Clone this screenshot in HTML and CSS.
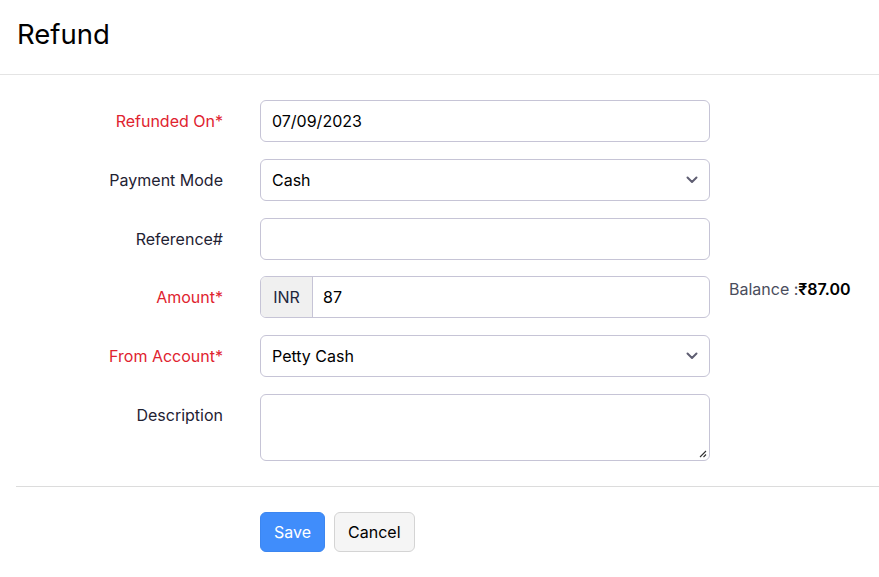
FILE: index.html
```html
<!DOCTYPE html>
<html>
<head>
<meta charset="utf-8">
<link rel="stylesheet" href="styles.css">
</head>
<body>
<div class="header"><h1 class="title">Refund</h1></div>
<form class="form">
  <div class="row">
    <label class="label required">Refunded On*</label>
    <div class="field"><div class="input">07/09/2023</div></div>
  </div>
  <div class="row">
    <label class="label">Payment Mode</label>
    <div class="field"><div class="input select">Cash<svg class="chev" width="12" height="8" viewBox="0 0 12 8"><path d="M1.5 1.5 L6 6 L10.5 1.5" fill="none" stroke="#5f5e72" stroke-width="2" stroke-linecap="round" stroke-linejoin="round"/></svg></div></div>
  </div>
  <div class="row">
    <label class="label">Reference#</label>
    <div class="field"><div class="input"></div></div>
  </div>
  <div class="row">
    <label class="label required">Amount*</label>
    <div class="field"><div class="input group"><span class="addon">INR</span><span class="gval">87</span></div></div>
    <div class="balance">Balance :<b>₹87.00</b></div>
  </div>
  <div class="row">
    <label class="label required">From Account*</label>
    <div class="field"><div class="input select">Petty Cash<svg class="chev" width="12" height="8" viewBox="0 0 12 8"><path d="M1.5 1.5 L6 6 L10.5 1.5" fill="none" stroke="#5f5e72" stroke-width="2" stroke-linecap="round" stroke-linejoin="round"/></svg></div></div>
  </div>
  <div class="row">
    <label class="label">Description</label>
    <div class="field"><div class="input textarea"><svg class="grip" width="9" height="9" viewBox="0 0 9 9"><path d="M8 2 L2 8 M8 5.5 L5.5 8" stroke="#333" stroke-width="1.1"/></svg></div></div>
  </div>
</form>
<div class="footer">
  <button type="button" class="btn primary">Save</button>
  <button type="button" class="btn">Cancel</button>
</div>
</body>
</html>
```
FILE: styles.css
```css
* { box-sizing: border-box; }
body {
  margin: 0;
  font-family: Inter, "Noto Sans", sans-serif;
  color: #21263c;
  background: #fff;
  width: 879px;
  height: 577px;
  overflow: hidden;
}
.header {
  height: 75px;
  border-bottom: 1px solid #e4e4e4;
  padding: 17px 0 0 17px;
}
.title {
  margin: 0;
  font-size: 27.5px;
  font-weight: 400;
  line-height: 34px;
  color: #000;
}
.form {
  padding-top: 25px;
  margin: 0 0 0 16px;
  border-bottom: 1px solid #dcdcdc;
  padding-bottom: 25px;
}
.row {
  display: flex;
  align-items: flex-start;
  margin-bottom: 16.8px;
}
.row:last-child { margin-bottom: 0; }
.label {
  width: 207px;
  text-align: right;
  font-size: 16px;
  line-height: 42px;
  color: #1f2233;
}
.label.required { color: #e0232f; }
.field {
  width: 450px;
  margin-left: 37px;
}
.input {
  height: 42px;
  border: 1px solid #c6c4d6;
  border-radius: 6px;
  padding: 0 11px;
  font-size: 16px;
  line-height: 40px;
  color: #000;
  position: relative;
}
.select { display: flex; justify-content: space-between; align-items: center; }
.group { display: flex; padding: 0; overflow: hidden; }
.addon {
  width: 52px;
  background: #f0f0f0;
  border-right: 1px solid #c6c4d6;
  text-align: center;
  color: #21263c;
}
.gval { padding-left: 10px; }
.textarea { height: 67px; }
.grip { position: absolute; right: 2px; bottom: 2px; }
.balance {
  margin-left: 19px;
  font-size: 16px;
  line-height: 26px;
  color: #4a4d5c;
}
.balance b { color: #000; font-weight: 600; }
.footer {
  padding: 25px 0 0 260px;
  display: flex;
  gap: 9px;
}
.btn {
  height: 40px;
  border: 1px solid #d4d4d4;
  border-radius: 6px;
  background: #f5f5f5;
  font-family: Inter, "Noto Sans", sans-serif;
  font-size: 16px;
  padding: 0 13px;
  color: #000;
}
.btn.primary {
  background: #408dfb;
  border-color: #3c86f0;
  color: #fff;
}
```
